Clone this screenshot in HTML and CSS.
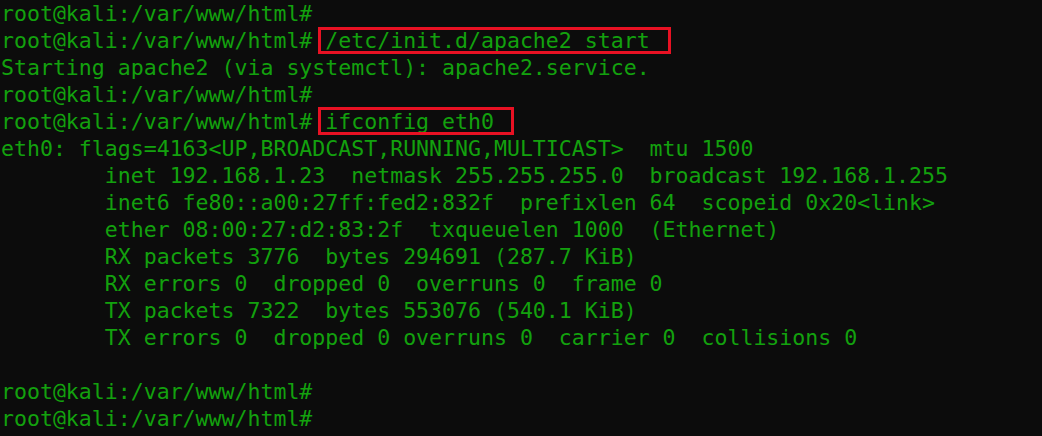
FILE: index.html
```html
<!DOCTYPE html>
<html>
<head>
<meta charset="utf-8">
<link rel="stylesheet" href="styles.css">
</head>
<body>
<pre class="terminal">root@kali:/var/www/html#
root@kali:/var/www/html# <span class="mark mark-long">/etc/init.d/apache2 start</span>
Starting apache2 (via systemctl): apache2.service.
root@kali:/var/www/html#
root@kali:/var/www/html# <span class="mark mark-short">ifconfig eth0</span>
eth0: flags=4163&lt;UP,BROADCAST,RUNNING,MULTICAST&gt;  mtu 1500
        inet 192.168.1.23  netmask 255.255.255.0  broadcast 192.168.1.255
        inet6 fe80::a00:27ff:fed2:832f  prefixlen 64  scopeid 0x20&lt;link&gt;
        ether 08:00:27:d2:83:2f  txqueuelen 1000  (Ethernet)
        RX packets 3776  bytes 294691 (287.7 KiB)
        RX errors 0  dropped 0  overruns 0  frame 0
        TX packets 7322  bytes 553076 (540.1 KiB)
        TX errors 0  dropped 0 overruns 0  carrier 0  collisions 0

root@kali:/var/www/html#
root@kali:/var/www/html#</pre>
</body>
</html>
```
FILE: styles.css
```css
html, body {
  margin: 0;
  padding: 0;
  background: #0c0c0c;
  height: 100%;
  overflow: hidden;
}

.terminal {
  margin: 0;
  padding: 0 0 0 1px;
  font-family: "DejaVu Sans Mono", "Liberation Mono", monospace;
  font-size: 21.55px;
  line-height: 27px;
  color: #13a10e;
  white-space: pre;
}

.mark {
  position: relative;
}

.mark::after {
  content: "";
  position: absolute;
  top: -1px;
  bottom: -1px;
  left: -7px;
  right: -21px;
  border: 3px solid #e81123;
  pointer-events: none;
}

.mark-short::after {
  top: -2px;
  right: -20px;
}
```
